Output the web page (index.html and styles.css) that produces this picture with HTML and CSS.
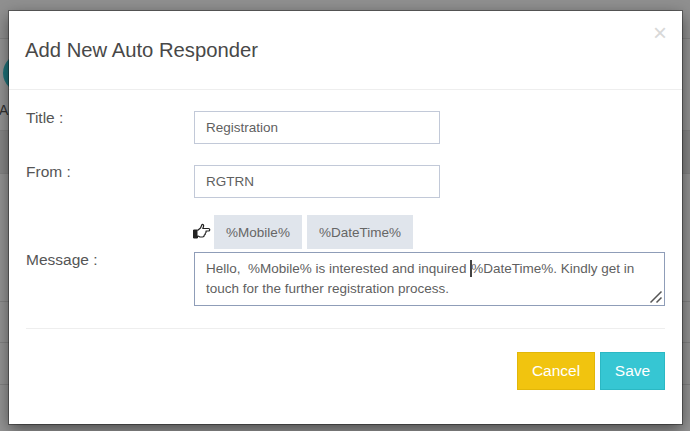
FILE: index.html
```html
<!DOCTYPE html>
<html lang="en">
<head>
<meta charset="utf-8">
<title>Add New Auto Responder</title>
<link rel="stylesheet" href="styles.css">
</head>
<body>
<div class="page">
  <div class="page-row page-row-top"></div>
  <div class="page-row page-row-avatar">
    <span class="avatar"></span>
    <span class="avatar-label">AI</span>
  </div>
  <div class="page-row page-row-dark"></div>
  <div class="page-row page-row-a"></div>
  <div class="page-row page-row-b"></div>
  <div class="page-row page-row-c"></div>
</div>
<div class="backdrop"></div>
<div class="modal">
  <header class="modal-header">
    <h4 class="modal-title">Add New Auto Responder</h4>
    <span class="close">×</span>
  </header>
  <div class="modal-body">
    <div class="field field-title">
      <label class="field-label">Title :</label>
      <input class="input" type="text" value="Registration">
    </div>
    <div class="field field-from">
      <label class="field-label">From :</label>
      <input class="input" type="text" value="RGTRN">
    </div>
    <div class="field field-message">
      <label class="field-label label-message">Message :</label>
      <div class="message-col">
        <div class="tags">
          <svg class="hand" width="18" height="17" viewBox="0 0 18 17" aria-hidden="true">
            <path d="M.5 7h4v8h-4z" fill="#222" stroke="#222"/>
            <path d="M4.500 7.500l3-2.500 1.500-3.500c1.200-.3 2 .6 1.500 2l-.7 2h5.700c1.700 0 1.700 2.500 0 2.500h-2.500c.4 1.200-.1 1.900-.7 2.200.2 1-.3 1.700-1 1.900 0 1.100-.7 1.900-1.800 1.900h-2.500l-2.500-1.300" fill="#fff" stroke="#222" stroke-width="1.200" stroke-linejoin="round"/>
          </svg>
          <button class="tag tag-mobile" type="button">%Mobile%</button>
          <button class="tag tag-date" type="button">%DateTime%</button>
        </div>
        <div class="textarea">
          <div class="textarea-text">Hello,&nbsp; %Mobile% is interested and inquired <span class="caret"></span>%DateTime%. Kindly get in touch for the further registration process.</div>
          <svg class="grip" width="14" height="14" viewBox="0 0 14 14" aria-hidden="true">
            <path d="M1.500 12.500L12.500 1.500M7.500 12.500L12.500 7.500" stroke="#555" stroke-width="1.500" fill="none"/>
          </svg>
        </div>
      </div>
    </div>
    <hr class="rule">
    <div class="actions">
      <button class="btn btn-cancel" type="button">Cancel</button>
      <button class="btn btn-save" type="button">Save</button>
    </div>
  </div>
</div>
</body>
</html>
```
FILE: styles.css
```css
* { box-sizing: border-box; }
html, body { margin: 0; height: 100%; }
body {
  width: 690px;
  height: 431px;
  overflow: hidden;
  position: relative;
  background: #fff;
  font-family: "Liberation Sans", Arial, sans-serif;
  color: #555;
}
.page { display: flex; flex-direction: column; height: 431px; }
.page-row { border-bottom: 1px solid #e0e0e0; }
.page-row-top { height: 39px; background: #f8f8f8; }
.page-row-avatar { height: 92px; position: relative; }
.avatar { position: absolute; left: 3px; top: 15px; width: 38px; height: 38px; border-radius: 50%; background: #36c6d3; }
.avatar-label { position: absolute; left: -1px; top: 63px; font-size: 14px; color: #555; }
.page-row-dark { height: 43px; background: #e9e9e9; }
.page-row-a { height: 128px; }
.page-row-b { height: 41px; }
.page-row-c { height: 42px; }
.backdrop { position: absolute; inset: 0; background: rgba(0, 0, 0, .42); }
.modal {
  position: absolute;
  left: 9px;
  top: 11px;
  width: 673px;
  height: 413px;
  background: #fff;
  box-shadow: 0 5px 15px rgba(0, 0, 0, .5);
  outline: 1px solid rgba(0, 0, 0, .35);
}
.modal-header {
  height: 79px;
  border-bottom: 1px solid #eee;
  padding: 26px 16px 0;
  position: relative;
}
.modal-title { margin: 0; font-size: 20.250px; font-weight: 400; line-height: 26px; color: #484848; }
.close {
  position: absolute;
  right: 15px;
  top: 9px;
  font-size: 24px;
  line-height: 26px;
  color: #d8d8d8;
}
.modal-body { padding: 0 17px; }
.field { display: flex; }
.field-title { padding-top: 21px; }
.field-from { padding-top: 21px; }
.field-message { padding-top: 17px; }
.field-label { width: 168px; flex: none; font-size: 15.500px; line-height: 14px; color: #555; }
.label-message { padding-top: 38px; }
.input {
  width: 246px;
  height: 33px;
  border: 1px solid #c2c9d8;
  padding: 0 11px;
  font: 13.500px "Liberation Sans", Arial, sans-serif;
  color: #5f5f5f;
  background: #fff;
  outline: none;
  border-radius: 0;
}
.message-col { width: 471px; display: flex; flex-direction: column; gap: 3px; }
.tags { display: flex; align-items: center; height: 34px; margin-left: -1px; }
.hand { flex: none; margin-right: 3px; margin-top: -1px; }
.tag {
  height: 34px;
  border: 0;
  background: #e0e5ec;
  color: #666;
  font: 13.500px "Liberation Sans", Arial, sans-serif;
  padding: 0;
  border-radius: 0;
}
.tag-mobile { width: 88px; margin-right: 5px; }
.tag-date { width: 106px; }
.textarea {
  height: 54px;
  border: 1px solid #8f9db8;
  padding: 6px 11px 4px;
  font-size: 13.500px;
  line-height: 20px;
  color: #5f5f5f;
  position: relative;
}
.caret { display: inline-block; width: 2px; height: 17px; margin-right: -1px; background: #444; vertical-align: -4px; }
.grip { position: absolute; right: 1px; bottom: 1px; }
.rule { border: 0; border-top: 1px solid #eee; margin: 22px 0 23px; }
.actions { display: flex; justify-content: flex-end; gap: 5px; }
.btn {
  height: 38px;
  border: 1px solid;
  color: #fff;
  font: 15.500px "Liberation Sans", Arial, sans-serif;
  padding: 0;
  border-radius: 0;
}
.btn-cancel { width: 78px; background: #f1c40f; border-color: #e2b709; }
.btn-save { width: 65px; background: #36c6d3; border-color: #2bb8c4; }
```
